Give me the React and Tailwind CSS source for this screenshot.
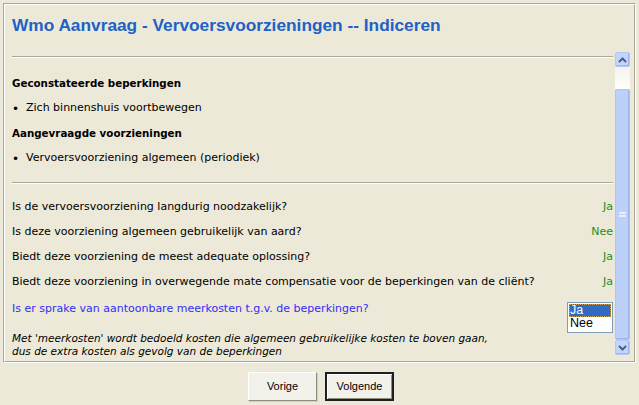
import React from "react";

function ScrollBtn({ dir }) {
  return (
    <div className="w-[15px] h-[15px] bg-[#C3D5FD] border border-[#B4C8F6] rounded-[2px] flex items-center justify-center shadow-[inset_-1px_-1px_0_#9DB5EC]">
      <svg width="9" height="6" viewBox="0 0 9 6">
        {dir === "up" ? (
          <path d="M1 5 L4.5 1.5 L8 5" stroke="#4D6185" strokeWidth="2" fill="none" />
        ) : (
          <path d="M1 1 L4.5 4.5 L8 1" stroke="#4D6185" strokeWidth="2" fill="none" />
        )}
      </svg>
    </div>
  );
}

function Scrollbar() {
  return (
    <div className="w-[15px] h-full flex flex-col">
      <ScrollBtn dir="up" />
      <div className="h-[22px] bg-gradient-to-b from-[#F4F3EE] to-[#FEFEFB]" />
      <div className="flex-1 bg-[#BCD0FA] border border-[#AEC4F6] rounded-[2px] flex items-center justify-center shadow-[inset_-1px_-1px_0_#9CB4EC]">
        <div className="w-[7px] h-[8px] flex flex-col justify-between py-[1px]">
          <div className="h-px bg-[#E8EEFD]" />
          <div className="h-px bg-[#E8EEFD]" />
          <div className="h-px bg-[#E8EEFD]" />
          <div className="h-px bg-[#E8EEFD]" />
        </div>
      </div>
      <ScrollBtn dir="down" />
    </div>
  );
}

function Hr() {
  return <div className="border-t border-t-[#ACA899] border-b border-b-white" />;
}

function Question({ q, a }) {
  return (
    <div className="h-[25px] flex items-center justify-between">
      <span>{q}</span>
      <span className="text-[#1E8C1E]">{a}</span>
    </div>
  );
}

export default function App() {
  return (
    <div className="w-[639px] h-[405px] bg-[#ECE9D8] pt-[3px] pl-[3px] overflow-hidden">
      <div className="w-[633px] h-[360px] border border-t-[#ACA899] border-l-[#ACA899] border-b-white border-r-white">
        <div className="w-full h-full border border-t-white border-l-white border-b-[#ACA899] border-r-[#ACA899] flex flex-col">
          <div className="h-[47px] pl-[7px] pt-[10px]">
            <h1 className="font-['Liberation_Sans',Arial,sans-serif] font-bold text-[17.3px] leading-[20px] text-[#2161C6]">
              Wmo Aanvraag - Vervoersvoorzieningen -- Indiceren
            </h1>
          </div>
          <div className="flex h-[303px] pl-[7px] pr-[4px]">
            <div className="flex-1 pr-[2px] font-['DejaVu_Sans',Verdana,sans-serif] text-[11px] text-black">
              <div className="pt-[4px]">
                <Hr />
              </div>
              <div className="pt-[13px]">
                <div className="h-[25px] flex items-center font-bold text-[10.3px]">Geconstateerde beperkingen</div>
                <div className="h-[25px] flex items-center">
                  <span className="w-[14px] text-[12px]">•</span>Zich binnenshuis voortbewegen
                </div>
                <div className="h-[25px] flex items-center font-bold text-[10.3px]">Aangevraagde voorzieningen</div>
                <div className="h-[25px] flex items-center">
                  <span className="w-[14px] text-[12px]">•</span>Vervoersvoorziening algemeen (periodiek)
                </div>
              </div>
              <div className="pt-[11px]">
                <Hr />
              </div>
              <div className="pt-[11px]">
                <Question q="Is de vervoersvoorziening langdurig noodzakelijk?" a="Ja" />
                <Question q="Is deze voorziening algemeen gebruikelijk van aard?" a="Nee" />
                <Question q="Biedt deze voorziening de meest adequate oplossing?" a="Ja" />
                <Question q="Biedt deze voorziening in overwegende mate compensatie voor de beperkingen van de cliënt?" a="Ja" />
                <div className="flex items-start justify-between pt-[7px]">
                  <span className="leading-[14px] text-[#3030F0]">
                    Is er sprake van aantoonbare meerkosten t.g.v. de beperkingen?
                  </span>
                  <div className="w-[46px] h-[31px] border border-[#7F9DB9] bg-white p-[1px] font-['Liberation_Sans',Arial,sans-serif] text-[12.5px] leading-[13px]">
                    <div className="bg-[#316AC5] text-white pl-[1px] outline outline-1 outline-dotted outline-[#C9A15A] -outline-offset-1">Ja</div>
                    <div className="pl-[1px]">Nee</div>
                  </div>
                </div>
                <div className="italic text-[10.5px] leading-[13px] -mt-px">
                  <div>Met 'meerkosten' wordt bedoeld kosten die algemeen gebruikelijke kosten te boven gaan,</div>
                  <div>dus de extra kosten als gevolg van de beperkingen</div>
                </div>
              </div>
            </div>
            <Scrollbar />
          </div>
        </div>
      </div>
      <div className="flex justify-center gap-[8px] pt-[9px] font-['Liberation_Sans',Arial,sans-serif] text-[11px]">
        <button className="w-[69px] h-[29px] bg-[#F2F1EA] border border-t-white border-l-white border-b-[#8F8D80] border-r-[#8F8D80] shadow-[1px_1px_0_#D4D0C8]">
          Vorige
        </button>
        <button className="w-[69px] h-[29px] bg-[#F2F1EA] border-2 border-[#1F1F1F] shadow-[inset_1px_1px_0_white,inset_-1px_-1px_0_#8F8D80]">
          Volgende
        </button>
      </div>
    </div>
  );
}
